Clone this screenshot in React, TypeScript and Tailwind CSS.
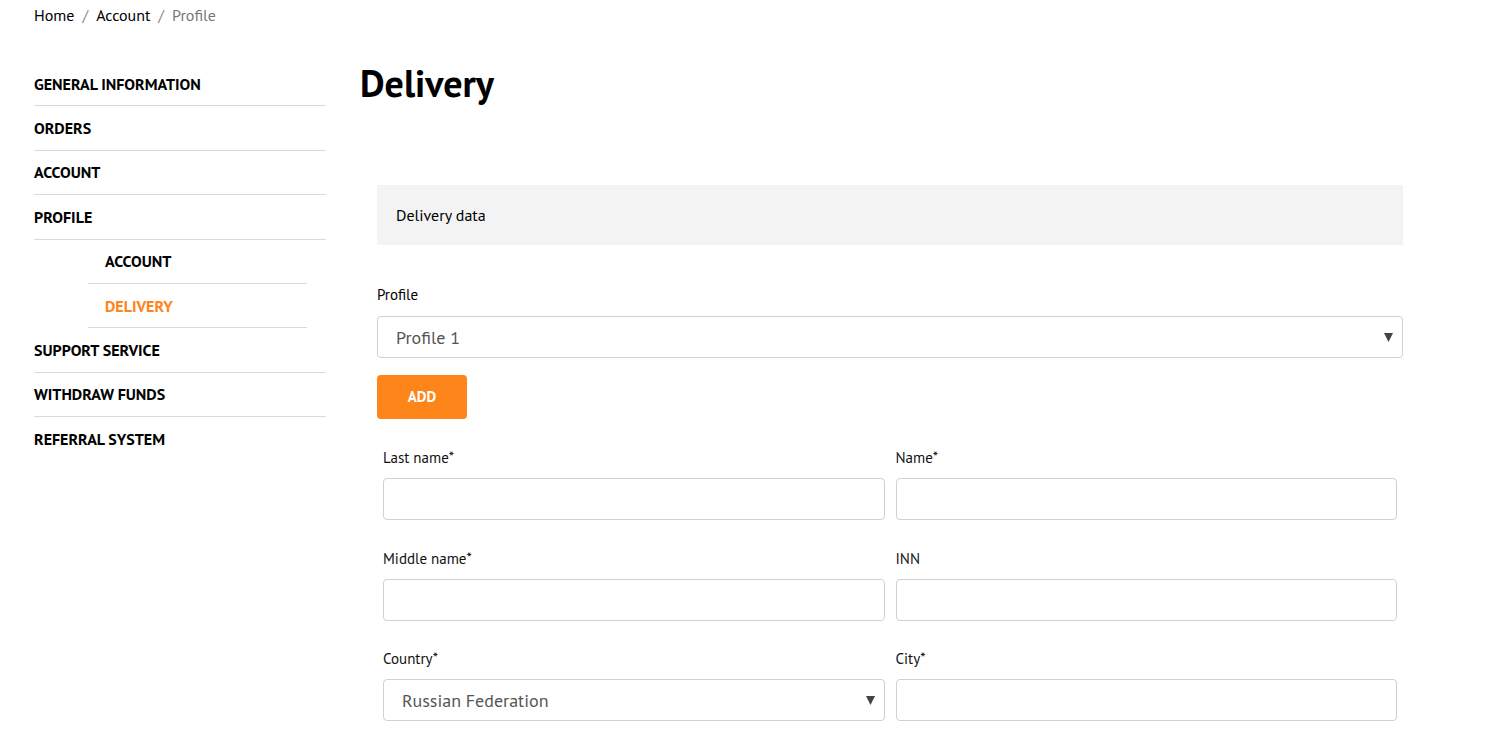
import React from "react";

const font = { fontFamily: '"PT Sans", "Liberation Sans", Arial, sans-serif' };

function Arrow() {
  return (
    <svg className="absolute right-[9px] top-[16px]" width="9" height="9" viewBox="0 0 9 9">
      <path d="M0 0 H9 L4.5 9 Z" fill="#444" />
    </svg>
  );
}

function NavItem({ label, active, sub, last }: { label: string; active?: boolean; sub?: boolean; last?: boolean }) {
  return (
    <div
      className={`flex h-[44.4px] items-center ${last ? "" : "border-b border-[#d9d9d9]"} ${sub ? "pl-[17px]" : ""} text-[16px] font-bold ${active ? "text-[#fd8519]" : "text-black"}`}
    >
      {label}
    </div>
  );
}

function Field({ label, select, value }: { label: string; select?: boolean; value?: string }) {
  return (
    <div className="flex flex-col">
      <div className="h-[21px] text-[15px] leading-[21px] text-[#111]">{label}</div>
      <div className="mt-[10px] relative flex h-[42px] items-center rounded-[4px] border border-[#d0d0d5] bg-white">
        {select ? (
          <>
            <span className="pl-[18px] text-[18px] text-[#555]">{value}</span>
            <Arrow />
          </>
        ) : (
          <input className="h-full w-full rounded-[4px] bg-transparent px-3 outline-none" />
        )}
      </div>
    </div>
  );
}

export default function App() {
  return (
    <div className="min-h-screen bg-white text-black" style={font}>
      <div className="pl-[34px] pt-[5px] text-[16px] leading-[21px]">
        <span>Home</span>
        <span className="px-[8px] text-[#888]">/</span>
        <span>Account</span>
        <span className="px-[8px] text-[#888]">/</span>
        <span className="text-[#777]">Profile</span>
      </div>
      <div className="mt-[36px] flex pl-[34px]">
        <div className="w-[292px] shrink-0">
          <NavItem label="GENERAL INFORMATION" />
          <NavItem label="ORDERS" />
          <NavItem label="ACCOUNT" />
          <NavItem label="PROFILE" />
          <div className="ml-[54px] mr-[19px]">
            <NavItem label="ACCOUNT" sub />
            <NavItem label="DELIVERY" sub active />
          </div>
          <NavItem label="SUPPORT SERVICE" />
          <NavItem label="WITHDRAW FUNDS" />
          <NavItem label="REFERRAL SYSTEM" last />
        </div>
        <div className="ml-[34px] w-[1043px]">
          <h1 className="mt-[-3px] text-[38px] font-bold leading-[48px]">Delivery</h1>
          <div className="ml-[17px] mt-[78px] w-[1026px]">
            <div className="flex h-[60px] items-center bg-[#f3f3f3] pl-[19px] text-[16px]">Delivery data</div>
            <div className="mt-[39px] text-[15px] leading-[21px]">Profile</div>
            <div className="relative mt-[11px] flex h-[42px] items-center rounded-[4px] border border-[#d0d0d5]">
              <span className="pl-[18px] text-[18px] text-[#555]">Profile 1</span>
              <Arrow />
            </div>
            <button className="mt-[17px] flex h-[44px] w-[90px] items-center justify-center rounded-[4px] bg-[#fd8519] text-[15px] font-bold text-white">
              ADD
            </button>
            <div className="mx-[6px] mt-[28px] grid grid-cols-2 gap-x-[11px] gap-y-[27.5px]">
              <Field label="Last name*" />
              <Field label="Name*" />
              <Field label="Middle name*" />
              <Field label="INN" />
              <Field label="Country*" select value="Russian Federation" />
              <Field label="City*" />
            </div>
          </div>
        </div>
      </div>
    </div>
  );
}
